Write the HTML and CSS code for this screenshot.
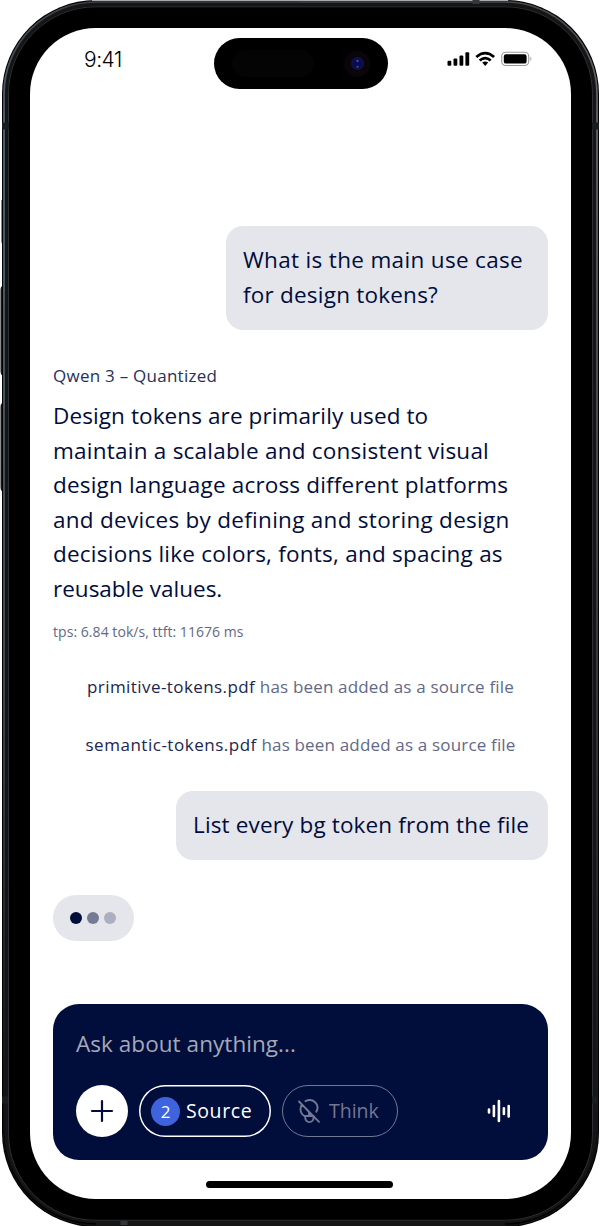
FILE: index.html
```
<!DOCTYPE html>
<html lang="en">
<head>
<meta charset="utf-8">
<title>Chat</title>
<link rel="stylesheet" href="styles.css">
</head>
<body>
<div class="device">
  <svg class="rim" width="600" height="1226" viewBox="0 0 600 1226" aria-hidden="true">
    <defs>
      <linearGradient id="metal" x1="0" y1="0" x2="0" y2="1">
        <stop offset="0" stop-color="#3c3f44"/><stop offset=".1" stop-color="#56677a"/><stop offset=".55" stop-color="#45515e"/><stop offset=".85" stop-color="#151b22"/><stop offset="1" stop-color="#000"/>
      </linearGradient>
      <linearGradient id="metalRight" x1="0" y1="0" x2="0" y2="1">
        <stop offset="0" stop-color="#44474b"/><stop offset=".1" stop-color="#6d7074"/><stop offset=".6" stop-color="#393b3e"/><stop offset=".9" stop-color="#16181b"/><stop offset="1" stop-color="#000"/>
      </linearGradient>
    </defs>
    <path fill="#15191d" d="M3 200H1.500v42q0 2 1.500 2zM3 286q-2.500 0-2.500 4v81q0 4 2.500 5zM3 403q-2.500 0-2.500 4v80q0 4 2.500 5z"/>
    <rect x="2" y="0" width="597" height="1227" rx="94" fill="#000"/>
    <rect x="5.5" y="3.5" width="590" height="1220" rx="91" fill="none" stroke="#151515" stroke-width="5"/>
    <path d="M300 2H96A92 92 0 0 0 4 94V1132A92 92 0 0 0 96 1224" fill="none" stroke="url(#metal)" stroke-width="1.7"/>
    <path d="M300 2H505A92 92 0 0 1 597 94V1132A92 92 0 0 1 505 1224" fill="none" stroke="url(#metalRight)" stroke-width="1.6"/>
    <path d="M92 .5H508" stroke="#a8a9ad" stroke-width="1.2"/>
    <rect x="8.5" y="6.8" width="584" height="1213.500" rx="87" fill="none" stroke="#303134" stroke-width="1"/>
    <path d="M2 126h7M592 126h7M2 1100h6M592 1100h6" stroke="#181d22" stroke-width="7"/>
    <path d="M476 0v4M124 1221v4" stroke="#35363a" stroke-width="7"/>
  </svg>
  <main class="screen">
    <header class="status">
      <span class="time">9:41</span>
      <div class="island"><span class="sensor"></span><span class="camera"><i class="lens"></i></span></div>
      <svg class="signals" width="88" height="16" viewBox="0 0 88 16">
        <g fill="#000"><rect x="1.500" y="9.800" width="3.800" height="5" rx="1"/><rect x="7.500" y="7.500" width="3.800" height="7.300" rx="1"/><rect x="13.500" y="4.600" width="3.800" height="10.200" rx="1"/><rect x="19.400" y="1.200" width="3.800" height="13.600" rx="1"/></g>
        <g fill="none" stroke="#000" stroke-width="2.800"><path d="M30.300 6Q39.200-1.800 48.100 6"/><path d="M33.700 9.500Q39.200 4.700 44.700 9.500"/></g>
        <path d="M36.200 11.600q3-2.200 6 0L39.200 15z"/>
        <rect x="55.700" y="1.200" width="27" height="13.300" rx="4" fill="none" stroke="#999" stroke-width="1.100"/>
        <rect x="57.800" y="3.200" width="22.800" height="9.400" rx="2.200"/><path d="M84.400 5.500q2 2.400 0 4.800z" fill="#999"/>
      </svg>
    </header>
    <section class="chat">
      <div class="bubble question"><span class="l1">What is the main use case</span><br><span class="l2">for design tokens?</span></div>
      <div class="model">Qwen 3 – Quantized</div>
      <p class="answer"><span class="a1">Design tokens are primarily used to</span><br><span class="a2">maintain a scalable and consistent visual</span><br><span class="a3">design language across different platforms</span><br><span class="a4">and devices by defining and storing design</span><br><span class="a5">decisions like colors, fonts, and spacing as</span><br><span class="a6">reusable values.</span></p>
      <div class="stats">tps: 6.84 tok/s, ttft: 11676 ms</div>
      <div class="notice first"><b>primitive-tokens.pdf</b> has been added as a source file</div>
      <div class="notice second"><b>semantic-tokens.pdf</b> has been added as a source file</div>
      <div class="bubble request">List every bg token from the file</div>
      <div class="typing"><i></i><i></i><i></i></div>
    </section>
    <footer class="composer">
      <div class="prompt">Ask about anything...</div>
      <div class="tools">
        <div class="add"><svg width="24" height="24" viewBox="0 0 24 24"><path d="M12 2v20M2 12h20" fill="none" stroke="#010d3b" stroke-width="2.200" stroke-linecap="round"/></svg></div>
        <div class="pill source"><span class="count">2</span><span class="label">Source</span></div>
        <div class="pill think">
          <svg width="24" height="26" viewBox="0 0 24 26" fill="none" stroke="currentColor" stroke-width="1.900" stroke-linecap="round"><path d="M2 3.500 22 23.800M8.500 3.200C15.500-.5 23.500 6 19.300 13.700M4.300 7.500C2.500 12 4 16.500 8 18.500M8 18h8.500v2a4 4 0 0 1-8.200 0zM12 17.500v-3.800L9.200 11"/></svg>
          <span class="label">Think</span>
        </div>
        <svg class="voice" width="24" height="24" viewBox="0 0 24 24"><path d="M2 10.500v3M6.900 7v10M11.900 2v20M16.900 9.200v5.800M21.700 7v10.500" fill="none" stroke="#fff" stroke-width="2.600" stroke-linecap="round"/></svg>
      </div>
    </footer>
    <div class="home"></div>
  </main>
</div>
</body>
</html>
```
FILE: styles.css
```
* { box-sizing: border-box; }
body { margin: 0; background: #fff; font-family: "Open Sans", sans-serif; color: #010d3b; }
.device { position: relative; width: 600px; height: 1226px; padding: 28px 29px 27px 30px; overflow: hidden; }
.rim { position: absolute; left: 0; top: 0; }
.screen { position: relative; width: 541px; height: 1171px; border-radius: 66px; background: #fff; padding: 10px 23px 0; display: flex; flex-direction: column; align-items: stretch; }
.status { height: 52px; display: grid; grid-template-columns: 161px 174px 1fr; }
.time { font: 21px/44px Inter, sans-serif; font-weight: 350; letter-spacing: -.5px; color: #000; padding-left: 31px; }
.island { height: 51px; background: #000; border-radius: 26px; display: flex; align-items: center; justify-content: space-between; padding: 0 18px; }
.sensor { width: 82px; height: 27px; border-radius: 14px; background: #040404; }
.camera { width: 26px; height: 26px; border-radius: 50%; background: #09050b; display: grid; place-items: center; }
.lens { width: 13px; height: 13px; border-radius: 50%; background: radial-gradient(circle at 50% 30%, #535ca0 0 .5px, transparent 1.500px), radial-gradient(circle at 50% 75%, #19666b 0 .5px, transparent 1.500px), radial-gradient(circle, #0b0b55 45%, #151638 70%); }
.signals { margin: 13px 0 0 58px; }
.chat { padding-top: 136px; display: flex; flex-direction: column; align-items: flex-start; height: 914px; white-space: nowrap; }
.bubble { background: #e5e6eb; border-radius: 17px; padding: 17px; font-size: 22.5px; line-height: 34.6px; align-self: flex-end; }
.question { width: 322px; height: 103.500px; }
.request { width: 372px; height: 69px; letter-spacing: .15px; }
.l1 { letter-spacing: .33px; }
.l2 { letter-spacing: .22px; }
.a1 { letter-spacing: .1px; }
.a2 { letter-spacing: .24px; }
.a3 { letter-spacing: .18px; }
.a4 { letter-spacing: .28px; }
.a5 { letter-spacing: .23px; }
.model { margin-top: 34.500px; font-size: 17px; line-height: 24px; color: #27305a; letter-spacing: .25px; }
.answer { margin: 11px 0 0; font-size: 22.5px; line-height: 34.6px; }
.stats { margin-top: 14px; font-size: 14px; line-height: 22px; color: #626987; letter-spacing: .05px; }
.notice { align-self: center; font-size: 17px; line-height: 26px; color: #626987; letter-spacing: .17px; }
.first { margin-top: 31px; }
.second { margin-top: 32px; }
.notice b { font-weight: 500; color: #1b2550; letter-spacing: .42px; }
.second b { letter-spacing: .52px; }
.request { margin-top: 33px; }
.typing { margin-top: 35px; width: 81px; height: 46px; border-radius: 23px; background: #e5e6eb; display: flex; align-items: center; justify-content: center; gap: 5px; padding-right: 1px; }
.typing i { width: 12px; height: 12px; border-radius: 50%; background: #010d3b; }
.typing i:nth-child(2) { background: #757b97; }
.typing i:nth-child(3) { background: #abafc0; }
.composer { height: 156px; border-radius: 26px; background: #010d3b; padding: 22px 37px 0 23px; }
.prompt { font-size: 22.5px; line-height: 36px; color: #a4a8b8; letter-spacing: .05px; }
.tools { margin-top: 23px; display: flex; align-items: center; height: 52px; }
.add { width: 52px; height: 52px; border-radius: 50%; background: #fff; display: grid; place-items: center; margin-right: 11px; }
.pill { height: 52px; border-radius: 26px; display: flex; align-items: center; font-size: 19.500px; color: #fff; }
.label { padding-bottom: 1px; }
.source { width: 132px; box-shadow: inset 0 0 0 1.500px #fff; padding-left: 12px; gap: 6px; margin-right: 11px; letter-spacing: .6px; }
.count { width: 29px; height: 29px; border-radius: 50%; background: #3e63dd; text-align: center; font-size: 17px; line-height: 29px; letter-spacing: 0; }
.think { width: 116px; border: 1px solid #727894; color: #727894; padding-left: 14px; gap: 8px; }
.voice { margin-left: auto; }
.home { width: 187px; height: 7px; border-radius: 4px; background: #000; margin: 21px 0 0 153px; }
```
